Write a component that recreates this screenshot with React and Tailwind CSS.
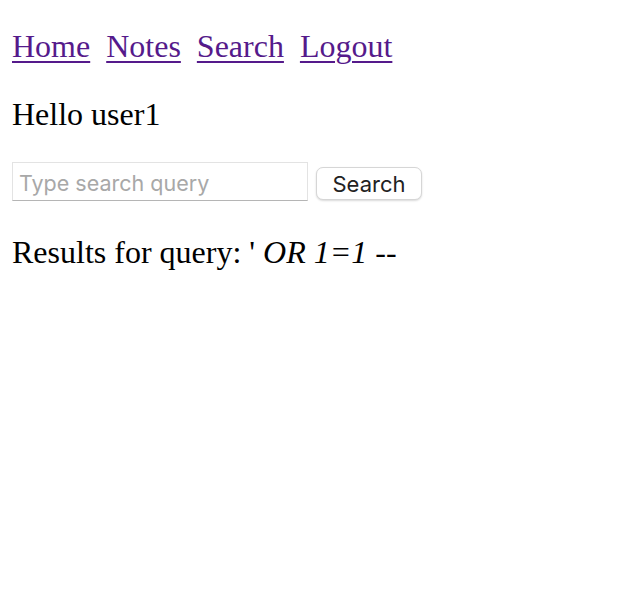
import { useState } from 'react';

const App = () => {
    const [query, setQuery] = useState('');

    return (
        <div className="min-h-screen bg-white text-black px-3 pt-7 font-['Liberation_Serif',serif]">

            {/* Navigation */}
            <nav className="flex gap-[16px] text-[32px] leading-[37px] text-[#551a8b]">
                <a href="#" className="underline decoration-[2px] underline-offset-[4px]">Home</a>
                <a href="#" className="underline decoration-[2px] underline-offset-[4px]">Notes</a>
                <a href="#" className="underline decoration-[2px] underline-offset-[4px]">Search</a>
                <a href="#" className="underline decoration-[2px] underline-offset-[4px]">Logout</a>
            </nav>

            <p className="mt-[31px] text-[32px] leading-[37px]">Hello user1</p>

            {/* Search form */}
            <form className="mt-[29px] flex items-end gap-[8px]" onSubmit={(e) => e.preventDefault()}>
                <input
                    type="text"
                    value={query}
                    onChange={(e) => setQuery(e.target.value)}
                    placeholder="Type search query"
                    className="w-[296px] h-[39px] px-[6px] pt-[3px] border border-[#e3e3e3] border-b-[#b5b5b5] text-[21.5px] font-['Inter',sans-serif] placeholder:text-[#a8a8a8] outline-none"
                />
                <button
                    type="submit"
                    className="w-[106px] h-[33px] mb-[1px] rounded-[7px] border border-[#d6d6d6] bg-white shadow-[0_1px_2px_rgba(0,0,0,0.15)] text-[22px] leading-none text-[#222] font-['Inter',sans-serif]"
                >
                    Search
                </button>
            </form>

            <p className="mt-[33px] text-[32px] leading-[37px]">
                Results for query: ' <i>OR 1=1</i> --
            </p>
        </div>
    );
};

export default App;
